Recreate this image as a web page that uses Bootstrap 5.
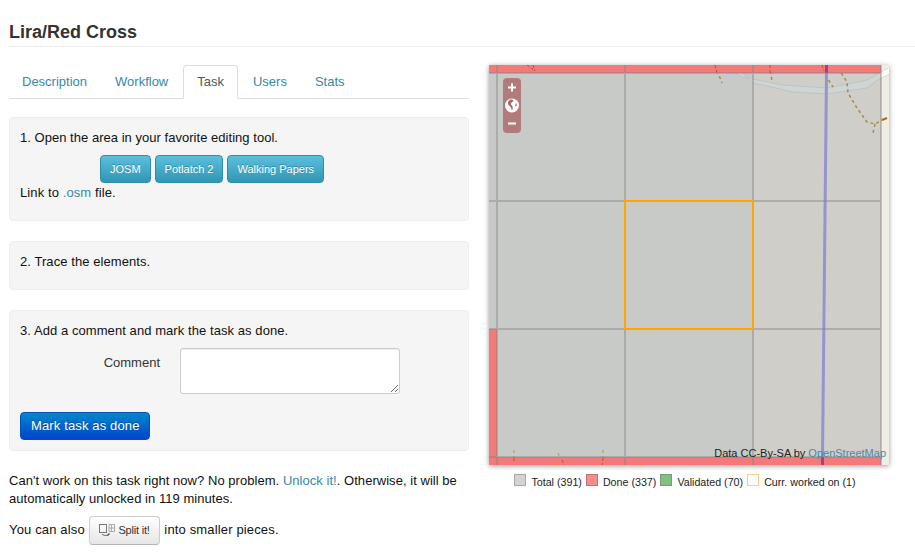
<!DOCTYPE html>
<html lang="en">
<head>
  <meta charset="UTF-8" />
  <title>Lira/Red Cross</title>
  <link href="https://cdn.jsdelivr.net/npm/bootstrap@5.3.0/dist/css/bootstrap.min.css" rel="stylesheet" />
  <style>
    body {
      font-family: "Liberation Sans", Arial, sans-serif;
      font-size: 13px;
      line-height: 18px;
      color: #333;
      background: #fff;
      overflow: hidden;
    }
    a { color: #3a87a5; text-decoration: none; }
    .page-wrap { padding: 0 0 0 9px; }
    .title-bar {
      padding: 20px 0 2px;
      border-bottom: 1px solid #eee;
      margin-bottom: 18px;
    }
    .title-bar h1 {
      font-size: 18px;
      font-weight: 700;
      line-height: 24px;
      color: #333;
      margin: 0;
    }
    .left-col { width: 460px; }
    .right-col { width: 400px; margin-left: 20px; }
    .task-tabs { border-bottom: 1px solid #ddd; margin-bottom: 18px; }
    .task-tabs .nav-link {
      color: #3a87a5;
      padding: 7px 12px;
      line-height: 18px;
      font-size: 13px;
      margin-right: 2px;
      border-radius: 4px 4px 0 0;
    }
    .task-tabs .nav-link.active { color: #555; border-color: #ddd #ddd #fff; padding: 7px 13px; }
    .step-box {
      background: #f5f5f5;
      border: 1px solid #eee;
      border-radius: 4px;
      padding: 11px 10px 18px;
      margin-bottom: 20px;
      color: #111;
      letter-spacing: .07px;
    }
    .step-box p { margin: 0 0 8px; }
    .step-box p:last-child { margin-bottom: 0; }
    .box-first p { letter-spacing: .03px; }
    .box-last { padding-bottom: 10px; margin-bottom: 21px; }
    .link-line { padding-top: 1px; letter-spacing: .1px; }
    .tool-btns { padding-left: 80px; }
    .btn-tool {
      color: #fff;
      font-size: 11px;
      line-height: 14px;
      padding: 6px 9px;
      border: 1px solid #2f8fab;
      border-radius: 4px;
      background: linear-gradient(#5bc0de, #2f96b4);
      text-shadow: 0 -1px 0 rgba(0,0,0,.25);
      letter-spacing: 0;
    }
    .comment-row { display: flex; margin-bottom: 18px; }
    .comment-label { width: 140px; text-align: right; padding-top: 6px; color: #333; letter-spacing: 0; }
    .comment-input {
      width: 220px;
      height: 46px;
      margin-left: 20px;
      border: 1px solid #ccc;
      border-radius: 3px;
      box-shadow: inset 0 1px 1px rgba(0,0,0,.075);
      display: block;
    }
    .btn-done {
      color: #fff;
      font-size: 13px;
      line-height: 18px;
      padding: 4px 9px 4px 10px;
      border: 1px solid #0050b8;
      border-radius: 4px;
      background: linear-gradient(#0088cc, #0044cc);
      text-shadow: 0 -1px 0 rgba(0,0,0,.25);
      letter-spacing: .14px;
    }
    .after-note { color: #111; margin: 0 0 8px; letter-spacing: .04px; }
    .split-note { letter-spacing: .15px; }
    .btn-split {
      display: inline-block;
      vertical-align: middle;
      color: #333;
      font-size: 11px;
      line-height: 15px;
      padding: 6px 9px;
      margin-right: 1px;
      border: 1px solid #ccc;
      border-bottom-color: #b3b3b3;
      border-radius: 4px;
      background: linear-gradient(#fff, #e6e6e6);
      letter-spacing: -.2px;
    }
    .btn-split svg { vertical-align: -3px; margin-right: 1px; }
    .map-box {
      position: relative;
      width: 400px;
      height: 400px;
      box-shadow: 0 1px 5px rgba(0,0,0,.4);
      overflow: hidden;
      background: #f0ede5;
    }
    .map-box svg.map-art { display: block; }
    .zoom-ctl {
      position: absolute;
      left: 14px;
      top: 13px;
      width: 18px;
      height: 55px;
      border-radius: 4px;
      background: rgba(160, 70, 70, .6);
    }
    .map-credit {
      position: absolute;
      right: 3px;
      bottom: 5px;
      font-size: 11px;
      line-height: 14px;
      color: #222;
    }
    .map-credit a { color: #4a8aa5; }
    .legend-row {
      display: flex;
      justify-content: center;
      font-size: 10.7px;
      line-height: 14px;
      color: #222;
      margin-top: 10px;
      padding-right: 8px;
    }
    .legend-item { display: flex; align-items: flex-start; margin-right: 4px; }
    .legend-item:last-child { margin-right: 0; }
    .swatch { width: 12px; height: 12px; border: 1px solid; margin: -1px 5px 0 0; }
    .sw-total { background: #d3d3d3; border-color: #aaa; }
    .sw-done { background: #ff8a8a; border-color: #b77; }
    .sw-valid { background: #80c080; border-color: #7a9a80; }
    .sw-curr { background: #fff; border-color: #fc8; }
  </style>
</head>
<body>
<div class="page-wrap">
  <div class="title-bar"><h1>Lira/Red Cross</h1></div>
  <div class="d-flex">
    <div class="left-col">
      <ul class="nav nav-tabs task-tabs">
        <li class="nav-item"><a class="nav-link" href="#">Description</a></li>
        <li class="nav-item"><a class="nav-link" href="#">Workflow</a></li>
        <li class="nav-item"><a class="nav-link active" href="#">Task</a></li>
        <li class="nav-item"><a class="nav-link" href="#">Users</a></li>
        <li class="nav-item"><a class="nav-link" href="#">Stats</a></li>
      </ul>
      <div class="step-box box-first">
        <p>1. Open the area in your favorite editing tool.</p>
        <div class="tool-btns d-flex gap-1">
          <a class="btn-tool" href="#">JOSM</a>
          <a class="btn-tool" href="#">Potlatch 2</a>
          <a class="btn-tool" href="#">Walking Papers</a>
        </div>
        <div class="link-line">Link to <a href="#">.osm</a> file.</div>
      </div>
      <div class="step-box"><p>2. Trace the elements.</p></div>
      <div class="step-box box-last">
        <p>3. Add a comment and mark the task as done.</p>
        <div class="comment-row">
          <label class="comment-label">Comment</label>
          <textarea class="comment-input"></textarea>
        </div>
        <button class="btn-done" type="button">Mark task as done</button>
      </div>
      <p class="after-note">Can't work on this task right now? No problem. <a href="#">Unlock it!</a>. Otherwise, it will be automatically unlocked in 119 minutes.</p>
      <p class="after-note split-note">You can also
        <a class="btn-split" href="#"><svg width="16" height="14" viewBox="0 0 16 14" fill="none" stroke="#777"><rect x=".5" y="1.500" width="7" height="8"/><path d="M10 1.500h5.500v7H10zM12.500 1.500v7M10 5h5.500" stroke="#aaa"/><path d="M3 11c2 2 5 2 7 0M10 10v2H8" stroke="#555"/></svg> Split it!</a>
        into smaller pieces.</p>
    </div>
    <div class="right-col">
      <div class="map-box">
        <svg class="map-art" width="400" height="400" viewBox="0 0 400 400" fill="none">
          <rect width="392" height="400" fill="#c8cac8"/>
          <rect x="264" y="8" width="128" height="384" fill="#d0cec9"/>
          <path d="M231 0L254 12L294 20L338 23L378 15L392 7L400 3V9L392 13L378 23L338 29L304 27L264 18L244 0Z" fill="#cfd5d3" stroke="#bcc4c4"/>
          <path d="M392 7L400 3V9L392 13Z" fill="#fff"/>
          <path d="M333 5L344 22M349 3L358 17L359 28L368 43L378 57L386 59L393 55M386 59L384 68M226 0L233 18M281 0L283 17" stroke="#a8874f" stroke-width="1.500" stroke-dasharray="3 3"/>
          <path d="M393 55L398 53" stroke="#b06a10" stroke-width="2"/>
          <path d="M25 385V395M69 388L73 398M114 385V400" stroke="#a8975f" stroke-dasharray="3 3"/>
          <path d="M337.500 8L333.500 392" stroke="#9494d0" stroke-width="3"/>
          <rect width="392" height="8" fill="#f47a7a"/>
          <rect y="392" width="392" height="8" fill="#f47a7a"/>
          <rect y="264" width="8" height="128" fill="#f47a7a"/>
          <rect x="336" width="3" height="8" fill="#b03c80"/>
          <rect x="332" y="392" width="3" height="8" fill="#b03c80"/>
          <path d="M38 0L46 6M44 0L46 6M226 0L228 8M281 0V8M333 0L335 6M25 393V398M114 393L113 400M73 395L75 400" stroke="#d8402a" stroke-dasharray="3 2"/>
          <path d="M8 0V400M136 0V400M264 0V400M392 0V400M0 8H392M0 136H392M0 264H392M0 392H392" stroke="#808080" stroke-width="2" opacity=".42"/>
          <rect x="136" y="136" width="128" height="128" stroke="#ffa500" stroke-width="2"/>
        </svg>
        <div class="zoom-ctl">
          <svg width="18" height="55" viewBox="0 0 18 55" fill="none">
            <path d="M9 5.500v8M5 9.500h8M5 45.500h8" stroke="#fff" stroke-width="2"/>
            <circle cx="9" cy="27.500" r="7" fill="#fff"/>
            <path d="M7 21.500c-2 2-3 4-1 6c2 1 2 3 3 5c1-2 1-3 0-5c-2-1-1-3 1-4c1-1 0-2-3-2zM13 24.500l1 3l-2 1z" fill="#a86a6a"/>
          </svg>
        </div>
        <div class="map-credit">Data CC-By-SA by <a href="#">OpenStreetMap</a></div>
      </div>
      <div class="legend-row">
        <div class="legend-item"><span class="swatch sw-total"></span>Total (391)</div>
        <div class="legend-item"><span class="swatch sw-done"></span>Done (337)</div>
        <div class="legend-item"><span class="swatch sw-valid"></span>Validated (70)</div>
        <div class="legend-item"><span class="swatch sw-curr"></span>Curr. worked on (1)</div>
      </div>
    </div>
  </div>
</div>
<script src="https://cdn.jsdelivr.net/npm/bootstrap@5.3.0/dist/js/bootstrap.bundle.min.js"></script>
</body>
</html>
